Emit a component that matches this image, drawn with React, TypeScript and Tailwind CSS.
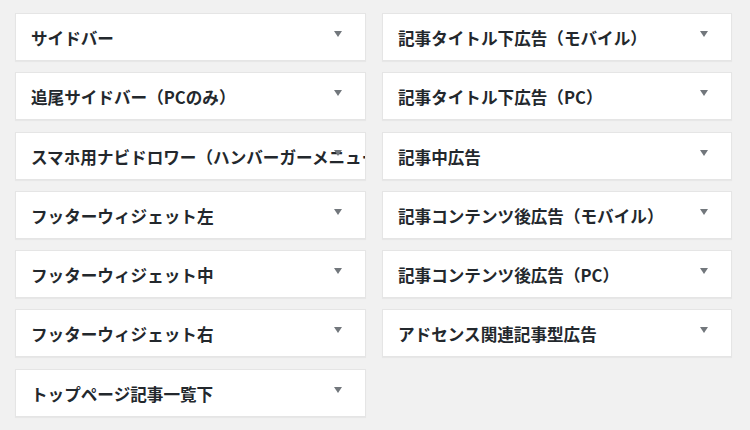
const left = [
	'サイドバー',
	'追尾サイドバー（PCのみ）',
	'スマホ用ナビドロワー（ハンバーガーメニュー）',
	'フッターウィジェット左',
	'フッターウィジェット中',
	'フッターウィジェット右',
	'トップページ記事一覧下',
]

const right = [
	'記事タイトル下広告（モバイル）',
	'記事タイトル下広告（PC）',
	'記事中広告',
	'記事コンテンツ後広告（モバイル）',
	'記事コンテンツ後広告（PC）',
	'アドセンス関連記事型広告',
]

function SidebarBox({ name }: { name: string }) {
	return (
		<div className="relative h-[48px] border border-[#e5e5e5] bg-white shadow-[0_1px_1px_rgba(0,0,0,0.04)]">
			<h2 className="h-full overflow-hidden whitespace-nowrap pl-[15px] pr-[7px] pt-[2px] text-[16.6px] font-bold leading-[44px] text-[#23282d]">
				{name}
			</h2>
			<span className="absolute right-[23px] top-[17px]">
				<svg width="8" height="6" viewBox="0 0 8 6">
					<path d="M0 0h8L4 6z" fill="#72777c" />
				</svg>
			</span>
		</div>
	)
}

export default function App() {
	return (
		<div
			className="h-[430px] w-[750px] bg-[#f1f1f1] pl-[15px] pt-[13px]"
			style={{ fontFamily: '"Noto Sans CJK JP", "Noto Sans", sans-serif' }}
		>
			<div className="grid grid-cols-[351px_350px] gap-x-[16px]">
				<div className="flex flex-col gap-[11.3px]">
					{left.map((n) => (
						<SidebarBox key={n} name={n} />
					))}
				</div>
				<div className="flex flex-col gap-[11.3px]">
					{right.map((n) => (
						<SidebarBox key={n} name={n} />
					))}
				</div>
			</div>
		</div>
	)
}
